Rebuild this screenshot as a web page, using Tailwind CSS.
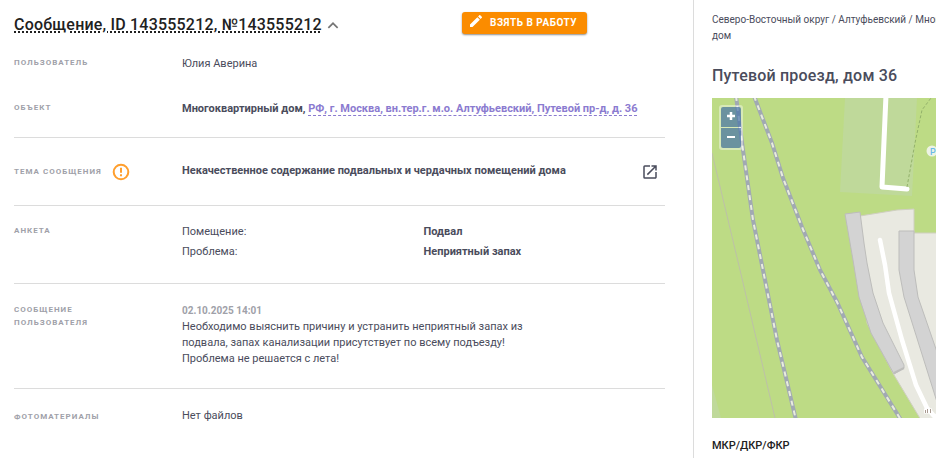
<!DOCTYPE html>
<html lang="ru">
<head>
  <meta charset="UTF-8" />
  <meta name="viewport" content="width=device-width, initial-scale=1.0"/>
  <title>Сообщение, ID 143555212</title>
  <script src="https://cdn.jsdelivr.net/npm/@tailwindcss/browser@4"></script>
</head>
<body class="flex min-h-screen overflow-hidden bg-white font-['Roboto',sans-serif] text-[11px] leading-4 text-[#4a4c5c]">

  <!-- Message -->
  <main class="min-w-0 flex-1 border-r border-[#dcdcdc] pl-3.5 pr-7">
    <header class="flex items-start justify-between pt-3 pr-[78px]">
      <h1 class="flex items-center text-base leading-[26px] font-medium tracking-[0.0125em] text-[#212121]">
        <a href="#" class="underline decoration-dotted decoration-2 underline-offset-1">Сообщение, ID 143555212, №143555212</a>
        <button type="button" aria-label="Свернуть" class="ml-0.5">
          <svg class="size-[18px]" viewBox="0 0 24 24" fill="#757575"><path d="M12 8l-7 7 1.600 1.600L12 11.200l5.400 5.400L19 15z"/></svg>
        </button>
      </h1>
      <button type="button" class="flex h-[22px] items-center gap-2 rounded-[3px] bg-[#fb8c00] pl-2 pr-2.5 text-[10px] font-bold tracking-[0.5px] text-white shadow-[0_1px_2px_rgba(0,0,0,0.45)]">
        <svg class="mb-1 size-3" viewBox="3 3 18 18" fill="currentColor"><path d="M3 17.250V21h3.750L17.810 9.940l-3.750-3.750L3 17.250zM20.710 7.040a1 1 0 0 0 0-1.410l-2.340-2.340a1 1 0 0 0-1.410 0l-1.830 1.830 3.750 3.750 1.830-1.830z"/></svg>
        ВЗЯТЬ В РАБОТУ
      </button>
    </header>

    <dl>
      <div class="flex pt-[18px]">
        <dt class="w-[168px] shrink-0 text-[8px] leading-[13px] font-bold tracking-[1px] text-[#a0a1a9]">ПОЛЬЗОВАТЕЛЬ</dt>
        <dd>Юлия Аверина</dd>
      </div>
      <div class="flex border-b border-[#dcdcdc] pt-[29px] pb-5">
        <dt class="w-[168px] shrink-0 text-[8px] leading-[13px] font-bold tracking-[1px] text-[#a0a1a9]">ОБЪЕКТ</dt>
        <dd class="font-bold">Многоквартирный дом, <a href="#" class="border-b border-dashed border-[#8b7bd0] text-[#8b7bd0]">РФ, г. Москва, вн.тер.г. м.о. Алтуфьевский, Путевой пр-д, д. 36</a></dd>
      </div>
      <div class="flex h-[68px] items-center border-b border-[#dcdcdc]">
        <dt class="flex w-[168px] shrink-0 items-center gap-2.5 text-[8px] leading-[13px] font-bold tracking-[1px] text-[#a0a1a9]">
          ТЕМА СООБЩЕНИЯ
          <svg class="size-[18px]" viewBox="0 0 18 18" fill="none" stroke="#ff9f2e" stroke-width="2"><circle cx="9" cy="9" r="7.300"/><path d="M9 4.800v5M9 11.300v2"/></svg>
        </dt>
        <dd class="flex flex-1 items-center justify-between pr-1.5 font-bold">
          <span class="pb-0.5">Некачественное содержание подвальных и чердачных помещений дома</span>
          <a href="#" aria-label="Открыть">
            <svg class="size-[18px]" viewBox="0 0 24 24" fill="currentColor"><path d="M19 19H5V5h7V3H5a2 2 0 0 0-2 2v14a2 2 0 0 0 2 2h14c1.100 0 2-.9 2-2v-7h-2v7zM14 3v2h3.590l-9.830 9.830 1.410 1.410L19 6.410V10h2V3h-7z"/></svg>
          </a>
        </dd>
      </div>
      <div class="flex border-b border-[#dcdcdc] pt-4 pb-[21px]">
        <dt class="w-[168px] shrink-0 pt-0.5 text-[8px] leading-[13px] font-bold tracking-[1px] text-[#a0a1a9]">АНКЕТА</dt>
        <dd class="grid flex-1 grid-cols-2 leading-5">
          <span>Помещение:</span><b>Подвал</b>
          <span>Проблема:</span><b>Неприятный запах</b>
        </dd>
      </div>
      <div class="flex border-b border-[#dcdcdc] pt-[19px] pb-[21px]">
        <dt class="w-[168px] shrink-0 text-[8px] leading-[13px] font-bold tracking-[1px] text-[#a0a1a9]">СООБЩЕНИЕ<br>ПОЛЬЗОВАТЕЛЯ</dt>
        <dd>
          <time class="block text-[10px] font-bold text-[#a0a1a9]">02.10.2025 14:01</time>
          <p>Необходимо выяснить причину и устранить неприятный запах из<br>подвала, запах канализации присутствует по всему подъезду!<br>Проблема не решается с лета!</p>
        </dd>
      </div>
      <div class="flex pt-[19px]">
        <dt class="w-[168px] shrink-0 pt-0.5 text-[8px] leading-[13px] font-bold tracking-[1px] text-[#a0a1a9]">ФОТОМАТЕРИАЛЫ</dt>
        <dd>Нет файлов</dd>
      </div>
    </dl>
  </main>

  <!-- Object -->
  <aside class="w-[242px] shrink-0 overflow-hidden pl-[18px]">
    <nav class="w-[300px] pt-3 text-[10px]">Северо-Восточный округ / Алтуфьевский / Многоквартирный<br>дом</nav>
    <h2 class="mt-5 text-base leading-6 font-medium tracking-[0.0125em]">Путевой проезд, дом 36</h2>
    <div class="relative mt-2.5 h-80 overflow-hidden bg-[#bddb85]">
      <svg class="h-80 w-full" viewBox="0 0 224 320" preserveAspectRatio="xMinYMin slice" fill="none">
        <path fill="#bfd99a" d="M133 0L128 94L200 98L205 0zM0 287L9 320H0z"/>
        <path stroke="#bdc0a8" d="M0 55L28 172L63 320"/>
        <!-- yard and buildings -->
        <path fill="#e9e9e1" stroke="#cfcfc0" d="M148 118L185 112L202 111V135H226V322H209L182 277L155 225z"/>
        <g fill="#d3d3d3" stroke="#bdbdbb">
          <path d="M133 116L148 114L152 145L155 165L161 195L171 225L192 267V270L182 276L159 235L147 199L141 162z"/>
          <path d="M187 133H202V172L206 199L225 254V304L192 199L187 172z"/>
        </g>
        <path stroke="#bdbdbb" stroke-width="2" d="M182 275L192 270"/>
        <g stroke="#fff" stroke-linecap="round" stroke-linejoin="round">
          <path stroke-width="5" d="M174 -3L170 89L195 91"/>
          <path stroke-width="4.500" d="M168 142L173 167L177 195L190 242L204 287L215 310L222 318H228"/>
        </g>
        <path stroke="#93b16b" stroke-dasharray="3 2" d="M195 89L203 45L210 12L219 0"/>
        <!-- railways -->
        <g stroke="#a1a9b3" stroke-width="4">
          <path d="M24 -2L31 52L41 122L51 172L65 242L84 322"/>
          <path d="M42 -2L60 45L71 80L90 129L108 172L125 204L150 259L189 322"/>
        </g>
        <g stroke="#e9ecdf" stroke-width="2" stroke-dasharray="5 5">
          <path d="M24 -2L31 52L41 122L51 172L65 242L84 322"/>
          <path d="M42 -2L60 45L71 80L90 129L108 172L125 204L150 259L189 322"/>
        </g>
        <circle cx="220" cy="53" r="5.500" fill="#edf3e4"/>
        <text x="218" y="57" fill="#6bbbe8" font-size="9" font-weight="500">P</text>
        <path stroke="#fff" stroke-width="5" d="M212 313h8"/>
        <path stroke="#a99a91" d="M213.500 315v-3M215.500 315v-4M218.500 315v-4"/>
      </svg>
      <div class="absolute top-[7px] left-[7px] flex flex-col gap-px rounded-[3px] bg-white/40 p-0.5 text-white">
        <button type="button" aria-label="Приблизить" class="flex size-5 items-start justify-center rounded-t-[2px] bg-[#003c88]/50 pt-[5px]"><svg class="size-2" viewBox="0 0 8 8" stroke="currentColor" stroke-width="2.500"><path d="M0 4h8M4 0v8"/></svg></button>
        <button type="button" aria-label="Отдалить" class="flex size-5 items-start justify-center rounded-b-[2px] bg-[#003c88]/50 pt-[5px]"><svg class="size-2" viewBox="0 0 8 8" stroke="currentColor" stroke-width="2"><path d="M0 4h8"/></svg></button>
      </div>
    </div>
    <h3 class="mt-5 font-medium text-[#212121]">МКР/ДКР/ФКР</h3>
  </aside>

</body>
</html>
